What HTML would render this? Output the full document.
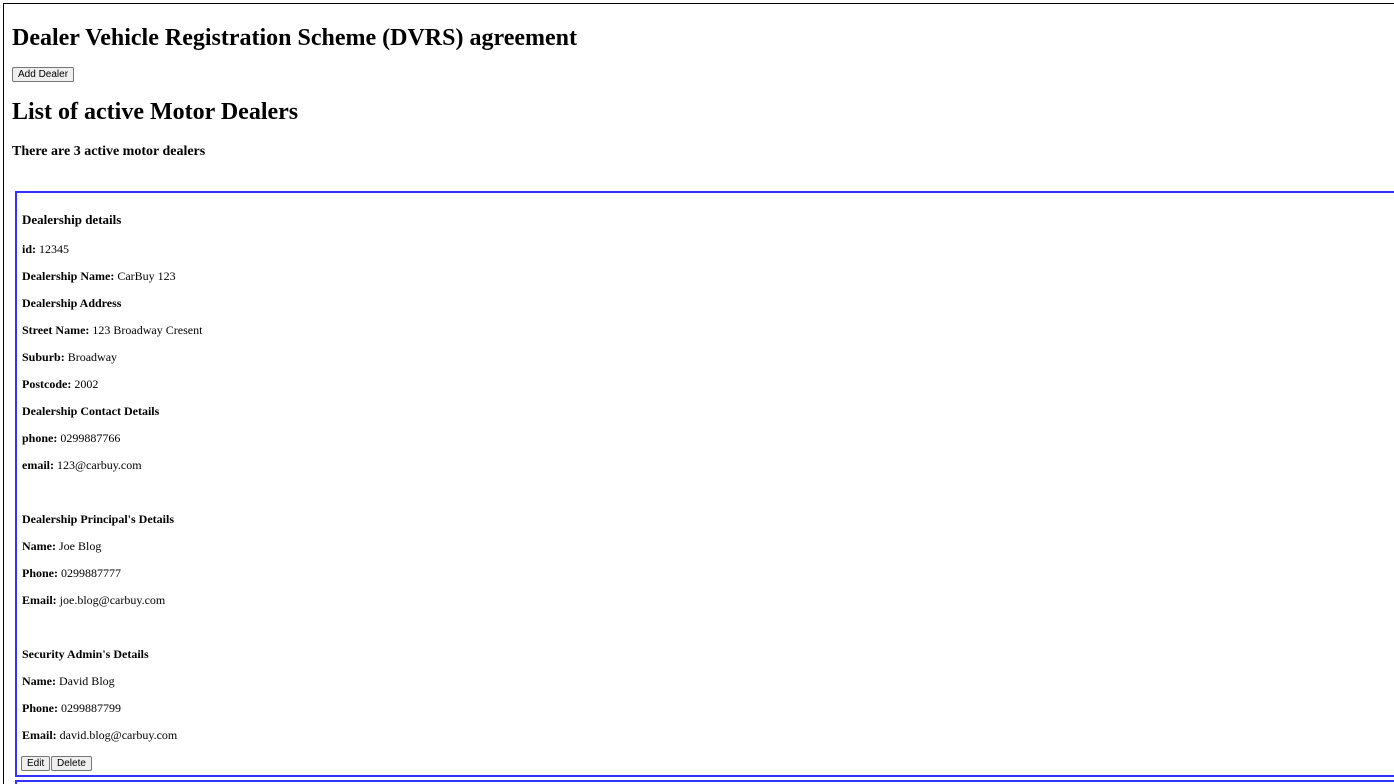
<!DOCTYPE html>
<html><head><style>
html,body{margin:0;padding:0;background:#fff;}
body{width:1394px;height:782px;overflow:hidden;position:relative;font-family:"Liberation Serif",serif;color:#000;}
.outer{position:absolute;left:3px;top:3px;width:1400px;height:780px;border-left:1px solid #000;border-top:1px solid #000;}
.t{position:absolute;white-space:nowrap;line-height:1;}
.box{position:absolute;left:15px;top:191px;width:1400px;height:582px;border:2px solid #3333ff;}
.box2{position:absolute;left:15px;top:780px;width:1400px;height:2px;border-top:2px solid #3333ff;border-left:2px solid #3333ff;}
.f{position:absolute;left:22px;font-size:12px;white-space:nowrap;line-height:14px;}
.h{font-size:13px;font-weight:bold;}
button{font-family:"Liberation Sans",sans-serif;font-size:10px;padding:0 5px;height:15px;border:1px solid #767676;border-radius:2px;background:#efefef;color:#000;position:absolute;line-height:13px;}
</style></head><body>
<div class="outer"></div>
<div class="t" style="left:12px;top:26px;font-size:24px;font-weight:bold;">Dealer Vehicle Registration Scheme (DVRS) agreement</div>
<button style="left:12px;top:67px;">Add Dealer</button>
<div class="t" style="left:12px;top:100px;font-size:24px;font-weight:bold;">List of active Motor Dealers</div>
<div class="t" style="left:12px;top:145px;font-size:14px;font-weight:bold;">There are 3 active motor dealers</div>
<div class="box"></div>
<div class="box2"></div>
<div class="f h" style="top:213px">Dealership details</div>
<div class="f" style="top:242px"><b>id:</b> 12345</div>
<div class="f" style="top:269px"><b>Dealership Name:</b> CarBuy 123</div>
<div class="f" style="top:296px"><b>Dealership Address</b></div>
<div class="f" style="top:323px"><b>Street Name:</b> 123 Broadway Cresent</div>
<div class="f" style="top:350px"><b>Suburb:</b> Broadway</div>
<div class="f" style="top:377px"><b>Postcode:</b> 2002</div>
<div class="f" style="top:404px"><b>Dealership Contact Details</b></div>
<div class="f" style="top:431px"><b>phone:</b> 0299887766</div>
<div class="f" style="top:458px"><b>email:</b> 123@carbuy.com</div>
<div class="f" style="top:512px"><b>Dealership Principal's Details</b></div>
<div class="f" style="top:539px"><b>Name:</b> Joe Blog</div>
<div class="f" style="top:566px"><b>Phone:</b> 0299887777</div>
<div class="f" style="top:593px"><b>Email:</b> joe.blog@carbuy.com</div>
<div class="f" style="top:647px"><b>Security Admin's Details</b></div>
<div class="f" style="top:674px"><b>Name:</b> David Blog</div>
<div class="f" style="top:701px"><b>Phone:</b> 0299887799</div>
<div class="f" style="top:728px"><b>Email:</b> david.blog@carbuy.com</div>
<button style="left:21px;top:756px;">Edit</button>
<button style="left:51px;top:756px;">Delete</button>
</body></html>
